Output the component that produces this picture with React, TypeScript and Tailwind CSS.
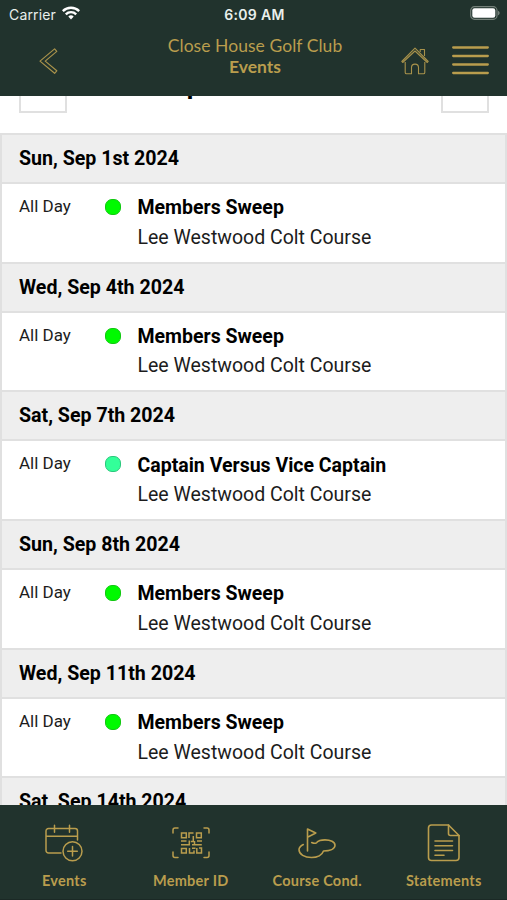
import React from "react";

interface ClubEvent {
  date: string;
  time: string;
  title: string;
  course: string;
  dotClass: string;
}

const GREEN_DOT = "bg-[#00fa00] border-[#12c712]";
const MINT_DOT = "bg-[#33ff99] border-[#2bc77c]";

const events: ClubEvent[] = [
  { date: "Sun, Sep 1st 2024", time: "All Day", title: "Members Sweep", course: "Lee Westwood Colt Course", dotClass: GREEN_DOT },
  { date: "Wed, Sep 4th 2024", time: "All Day", title: "Members Sweep", course: "Lee Westwood Colt Course", dotClass: GREEN_DOT },
  { date: "Sat, Sep 7th 2024", time: "All Day", title: "Captain Versus Vice Captain", course: "Lee Westwood Colt Course", dotClass: MINT_DOT },
  { date: "Sun, Sep 8th 2024", time: "All Day", title: "Members Sweep", course: "Lee Westwood Colt Course", dotClass: GREEN_DOT },
  { date: "Wed, Sep 11th 2024", time: "All Day", title: "Members Sweep", course: "Lee Westwood Colt Course", dotClass: GREEN_DOT },
  { date: "Sat, Sep 14th 2024", time: "All Day", title: "Members Sweep", course: "Lee Westwood Colt Course", dotClass: GREEN_DOT },
];

function StatusBar() {
  return (
    <div className="grid h-7 grid-cols-3 items-center pl-[9px] pr-[7px] font-['Inter',sans-serif] text-[14px] text-[#e9efec]">
      <div className="flex items-center gap-1.5">
        <span className="tracking-[0.15px]">Carrier</span>
        <svg className="-mt-0.5" width="18" height="14" viewBox="0 0 18 14" fill="none" stroke="#fff" strokeWidth="2.4">
          <path d="M.8 5.1a11.6 11.6 0 0 1 16.4 0" />
          <path d="M3.8 8.3a7.4 7.4 0 0 1 10.4 0" />
          <path d="M6.3 10.6a3.8 3.8 0 0 1 5.4 0L9 13.4z" fill="#fff" stroke="none" />
        </svg>
      </div>
      <span className="text-center font-semibold tracking-[0.35px]">6:09 AM</span>
      <svg className="-mt-0.5 justify-self-end" width="30" height="14" viewBox="0 0 30 14">
        <rect x="0.7" y="0.7" width="26.3" height="12.6" rx="3.8" fill="none" stroke="#748079" strokeWidth="1.2" />
        <rect x="2.3" y="2.3" width="23" height="9.4" rx="2.2" fill="#fff" />
        <path d="M28 4.7c2.2.8 2.2 3.8 0 4.6z" fill="#748079" />
      </svg>
    </div>
  );
}

function Header() {
  return (
    <header className="h-24 shrink-0 bg-[#21332d]">
      <StatusBar />
      <div className="flex h-[68px] items-start justify-between pl-[39px] pr-[18px]">
        <button type="button" aria-label="Back" className="mt-5 w-[88px]">
          <svg width="19" height="27" viewBox="0 0 19 27" fill="none" stroke="#a8924b" strokeWidth="1.2" strokeLinejoin="round">
            <path d="M15.6.9 1 13.1l14.6 12.2 2.2-2.5L6.2 13.1 17.8 3.4z" />
          </svg>
        </button>
        <div className="mr-[18px] mt-[7px] text-center font-['Lato',sans-serif] text-[17.5px] leading-[21px] text-[#b99d4d]">
          <h1 className="tracking-[0.05px]">Close House Golf Club</h1>
          <h2 className="font-bold">Events</h2>
        </div>
        <div className="flex items-start gap-[23px]">
          <button type="button" aria-label="Home" className="mt-[19px]">
            <svg width="28" height="28" viewBox="0 0 28 28" fill="none" stroke="#a8924b" strokeWidth="1.1" strokeLinejoin="round">
              <path d="m.8 14.5.9 1L14 4l12.3 11.5.9-1L14 1.2z" />
              <path d="M19.2 5V2.5h4.3v6.6" />
              <path d="M4.2 15v10.5c0 .8.6 1.3 1.3 1.3h5v-6.2a3.5 3.5 0 0 1 7 0v6.2h5c.8 0 1.3-.6 1.3-1.3V15" />
            </svg>
          </button>
          <button type="button" aria-label="Menu" className="mt-[18px]">
            <svg width="37" height="29" viewBox="0 0 37 29" stroke="#b99d4d" strokeWidth="2.3" strokeLinecap="round">
              <path d="M1.2 1.5h34.6M1.2 10h34.6M1.2 18.5h34.6M1.2 27h34.6" />
            </svg>
          </button>
        </div>
      </div>
    </header>
  );
}

function MonthPicker() {
  return (
    <div className="-mt-[31px] flex h-12 items-center justify-between pl-[19px] pr-[18px]">
      <button type="button" aria-label="Previous month" className="h-12 w-12 border-2 border-[#e0e0e0]" />
      <span className="-mt-2 text-[26px] leading-none font-bold">September 2024</span>
      <button type="button" aria-label="Next month" className="h-12 w-12 border-2 border-[#e0e0e0]" />
    </div>
  );
}

function EventDay({ event }: { event: ClubEvent }) {
  return (
    <section className="h-[128.7px]">
      <h3 className="h-[51px] border-y-2 border-[#e0e0e0] bg-[#eeeeee] pl-[17px] text-[19.6px] leading-[47px] font-bold">
        {event.date}
      </h3>
      <div className="flex pl-[17px] pt-2">
        <span className="w-[86px] pt-0.5 text-[17px] leading-6 text-[#1c1c1c]">{event.time}</span>
        <span className={`mt-[7px] h-4 w-4 rounded-[7px] border ${event.dotClass}`} />
        <div className="ml-[16.5px] pt-[1.4px] text-[19.5px] leading-[29.4px]">
          <p className="font-bold">{event.title}</p>
          <p className="text-[#1c1c1c]">{event.course}</p>
        </div>
      </div>
    </section>
  );
}

function CalendarIcon() {
  return (
    <svg width="38" height="38" viewBox="0 0 38 38" fill="none" stroke="currentColor" strokeWidth="1.5" strokeLinecap="round">
      <path d="M16 29H3.5A2.5 2.5 0 0 1 1 26.5V7a2.5 2.5 0 0 1 2.5-2.5H30A2.5 2.5 0 0 1 32.5 7v9M1 12.3h31.5M9.5 1.3v7M24.5 1.3v7" />
      <circle cx="27.5" cy="27.3" r="9.5" />
      <path d="M27.5 22.5v9.6M22.7 27.3h9.6" />
    </svg>
  );
}

function QrIcon() {
  return (
    <svg width="38" height="38" viewBox="0 0 38 38" fill="none" stroke="currentColor" strokeWidth="1.5">
      <path strokeLinecap="round" d="M1 9V6a2 2 0 0 1 2-2h3M32 4h3a2 2 0 0 1 2 2v3M1 28v3.500a2 2 0 0 0 2 2h3M32 33.500h3a2 2 0 0 0 2-2V28" />
      <path d="M9.500 9h4.800v4.800H9.500zM24.500 9h4.800v4.800h-4.800zM9.500 24.500h4.800v4.500H9.500z" />
      <path d="M17 14V9h4.500M21.300 12v5.500h-2.500M9 17h5.500M17.300 16.500v4.300H9M20 20.800h9.800M25 17h5M22.500 17v4M17.500 24v5h4.500v-2.500M20 24.300h3.500M24.800 24v5h4.700v-5h-2.500" />
    </svg>
  );
}

function CourseIcon() {
  return (
    <svg width="38" height="38" viewBox="0 0 38 38" fill="none" stroke="currentColor" strokeWidth="1.6" strokeLinecap="round" strokeLinejoin="round">
      <path d="M9.5 27V5l8.300 4-8.300 4.200" />
      <path d="M5.300 20.500C2.800 21.800 1 23.500 1 25.800c0 4.500 5.600 7.700 12.500 7.700 6 0 10.700-2.700 12-6.500 6.400 0 11.500-2 11.500-5.700 0-3.400-4.600-5.400-10-5.400-4.300 0-7 1.100-8.300 2.700-1.300 1-3.200.8-5-.1" />
    </svg>
  );
}

function StatementIcon() {
  return (
    <svg width="38" height="38" viewBox="0 0 38 38" fill="none" stroke="currentColor" strokeWidth="1.6" strokeLinecap="round" strokeLinejoin="round">
      <path d="M6.5 1H23.5L34 11.5V33.5a3 3 0 0 1-3 3H6.5a3 3 0 0 1-3-3V4a3 3 0 0 1 3-3z" />
      <path d="M23.5 1v8.5a2 2 0 0 0 2 2H34M10 17h17.500M10 21.700h17.500M10 26.500h17.500M10 31.200h9" />
    </svg>
  );
}

const tabs = [
  { label: "Events", Icon: CalendarIcon },
  { label: "Member ID", Icon: QrIcon },
  { label: "Course Cond.", Icon: CourseIcon },
  { label: "Statements", Icon: StatementIcon },
];

function TabBar() {
  return (
    <nav className="grid h-[95px] shrink-0 grid-cols-4 border-b border-[#1b2925] bg-[#21332d] pl-px font-['Lato',sans-serif] text-[#b99d4d]">
      {tabs.map(({ label, Icon }) => (
        <button key={label} type="button" className="flex flex-col items-center pt-[19px]">
          <Icon />
          <span className="mt-[9px] text-[14.5px] leading-5 font-bold tracking-[0.25px] whitespace-nowrap">{label}</span>
        </button>
      ))}
    </nav>
  );
}

export default function App() {
  return (
    <div className="flex h-[900px] w-[507px] flex-col overflow-hidden bg-white font-['Roboto',sans-serif] text-black">
      <Header />
      <main className="min-h-0 flex-1 overflow-hidden">
        <MonthPicker />
        <div className="mt-5 border-x-2 border-[#e0e0e0]">
          {events.map((event) => (
            <EventDay key={event.date} event={event} />
          ))}
        </div>
      </main>
      <TabBar />
    </div>
  );
}
